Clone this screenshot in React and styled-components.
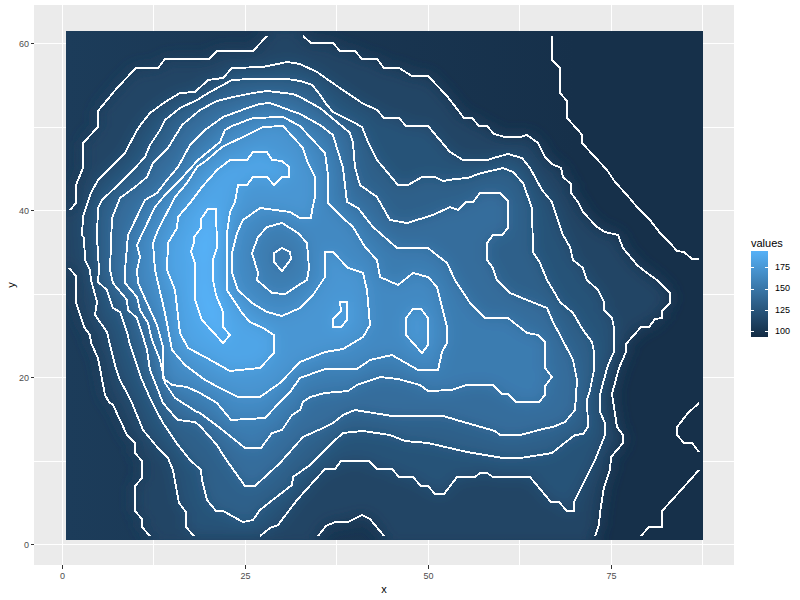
import styled, { createGlobalStyle } from 'styled-components';

const GlobalStyle = createGlobalStyle`
  html, body {
    margin: 0;
    background: #fff;
  }
`;

// contour lines traced in screen pixels, named by level
const A110 = [[70,210],[76,203],[76,185],[83,168],[83,143],[98,127],[98,111],[117,88],[136,68],[158,68],[165,59],[209,59],[217,51],[253,51],[267,36]];
const B110 = [[303,36],[311,43],[333,43],[340,51],[355,51],[362,59],[377,59],[384,68],[399,68],[412,76],[428,76],[447,96],[464,118],[472,118],[479,126],[487,126],[494,134],[505,137],[520,137],[527,135],[538,143],[545,157],[552,164],[561,168],[563,177],[571,184],[571,193],[578,202],[583,212],[597,227],[605,232],[618,235],[623,248],[637,265],[647,273],[657,280],[670,293],[670,303],[662,311],[662,318],[655,319],[649,327],[641,327],[626,344],[626,352],[619,368],[612,394],[617,427],[623,435],[623,443],[611,457],[610,470],[604,487],[600,513],[599,525],[595,536]];
const F110 = [[318,536],[326,526],[335,522],[348,522],[362,515],[370,519],[384,536]];
const G110 = [[69,268],[76,276],[76,302],[84,327],[90,335],[91,343],[98,358],[105,395],[109,402],[113,405],[127,435],[135,443],[135,453],[142,461],[142,478],[135,486],[135,511],[142,519],[142,527],[150,536]];
const C100 = [[552,36],[552,60],[560,68],[560,93],[567,101],[567,118],[578,130],[582,135],[582,143],[607,170],[615,182],[627,195],[637,207],[650,220],[660,233],[670,243],[677,251],[684,252],[692,259],[699,259]];
const D100 = [[699,403],[688,413],[677,427],[677,435],[684,443],[692,443],[699,452]];
const E100 = [[699,470],[682,489],[662,511],[662,527],[649,527],[641,536]];
const H120 = [[194,536],[186,527],[186,512],[179,503],[173,470],[168,458],[158,448],[143,430],[132,403],[127,393],[120,380],[115,365],[110,345],[107,332],[95,315],[97,302],[91,280],[90,270],[85,260],[84,238],[82,235],[83,217],[91,193],[98,180],[110,168],[125,153],[137,130],[142,123],[150,113],[165,102],[180,93],[195,92],[208,80],[223,78],[232,68],[263,67],[287,62],[300,64],[317,72],[337,86],[362,103],[377,110],[384,118],[399,118],[406,126],[428,126],[450,152],[463,160],[488,160],[497,157],[508,154],[522,158],[530,168],[542,190],[552,202],[557,217],[563,235],[570,247],[573,260],[583,268],[587,280],[598,290],[604,302],[604,310],[612,318],[614,328],[614,352],[608,365],[602,387],[600,395],[600,412],[605,423],[605,435],[595,460],[585,480],[574,502],[574,511],[567,511],[559,502],[551,502],[530,477],[493,477],[487,473],[480,473],[475,477],[457,477],[444,494],[435,494],[428,486],[421,486],[413,477],[399,477],[392,469],[377,469],[369,461],[341,461],[335,469],[325,469],[297,500],[278,525],[270,528],[260,536]];
const L130 = [[99,270],[97,237],[98,208],[102,200],[118,185],[133,170],[145,157],[150,145],[160,130],[165,120],[180,108],[197,100],[210,92],[232,80],[250,79],[287,79],[300,81],[312,85],[318,92],[327,105],[333,112],[353,122],[362,127],[368,142],[377,160],[398,185],[408,185],[422,177],[435,177],[443,181],[455,179],[468,178],[478,174],[503,168],[513,172],[523,183],[532,208],[533,252],[540,263],[547,280],[553,290],[560,302],[573,313],[583,330],[592,342],[594,352],[594,370],[590,390],[587,400],[588,427],[583,434],[575,435],[562,445],[552,453],[540,455],[520,458],[503,458],[467,452],[428,443],[405,441],[390,435],[363,431],[343,433],[333,442],[325,450],[310,465],[293,477],[292,485],[270,502],[260,510],[253,520],[243,522],[223,511],[216,511],[207,500],[202,480],[201,470],[190,460],[178,445],[163,423],[157,412],[150,398],[142,380],[137,365],[130,345],[127,332],[120,312],[113,308],[107,290],[98,282]];
const L140 = [[110,270],[112,218],[120,198],[135,187],[147,177],[153,163],[168,148],[182,125],[200,110],[217,101],[233,97],[253,93],[267,91],[293,94],[300,97],[320,108],[337,122],[350,133],[353,143],[355,167],[360,185],[377,197],[390,220],[407,223],[433,215],[450,207],[458,210],[466,202],[473,202],[480,193],[500,193],[508,201],[508,228],[502,235],[493,235],[487,243],[487,260],[493,268],[497,280],[510,293],[527,300],[547,308],[553,322],[560,335],[573,360],[577,380],[575,410],[565,422],[553,427],[547,428],[520,435],[500,435],[495,431],[467,423],[443,416],[392,416],[355,410],[343,415],[333,423],[323,428],[303,437],[280,463],[255,486],[245,486],[225,458],[217,445],[200,426],[195,422],[178,420],[175,417],[163,403],[158,390],[150,370],[147,350],[142,333],[137,318],[128,310],[127,300],[113,283]];
const L150 = [[125,270],[128,235],[145,200],[157,193],[167,180],[178,167],[190,145],[205,130],[223,117],[242,110],[260,104],[270,103],[300,114],[320,125],[333,135],[343,168],[347,202],[358,208],[373,227],[397,248],[428,248],[447,263],[455,280],[470,303],[485,318],[508,318],[527,333],[538,335],[545,342],[545,368],[552,377],[545,386],[545,395],[539,402],[516,402],[508,394],[502,394],[493,385],[467,385],[452,390],[428,391],[420,385],[398,379],[380,377],[357,385],[348,391],[325,393],[310,397],[303,402],[300,410],[292,415],[282,430],[272,433],[261,448],[245,448],[220,428],[200,413],[197,412],[175,398],[165,383],[160,360],[152,340],[148,323],[140,310],[137,297],[125,283]];
const L160 = [[137,270],[140,257],[137,245],[143,232],[155,207],[165,195],[180,180],[198,160],[220,142],[225,130],[232,126],[253,118],[283,117],[300,126],[310,137],[325,153],[328,175],[328,203],[343,218],[353,227],[365,247],[377,260],[380,277],[398,285],[413,273],[428,277],[437,287],[447,327],[447,343],[442,352],[438,370],[418,370],[392,355],[370,360],[357,369],[325,369],[300,378],[290,392],[280,402],[265,418],[231,420],[217,403],[200,393],[187,387],[172,385],[163,378],[163,347],[157,325],[147,303],[138,283]];
const L170 = [[155,270],[153,243],[158,230],[175,197],[187,183],[197,167],[207,160],[222,147],[247,135],[263,127],[283,126],[303,148],[308,163],[315,177],[315,197],[312,210],[311,218],[300,218],[290,212],[260,208],[243,220],[237,233],[232,253],[232,273],[238,290],[252,303],[267,312],[282,316],[300,308],[313,295],[325,277],[325,252],[333,252],[348,268],[363,273],[367,290],[370,325],[363,337],[343,349],[325,352],[300,362],[280,383],[260,397],[238,397],[220,388],[205,380],[185,365],[172,350],[165,313]];
const L180 = [[167,270],[168,243],[177,228],[178,217],[190,203],[202,187],[217,170],[230,160],[247,160],[253,152],[267,152],[272,160],[282,161],[289,167],[289,177],[282,177],[274,185],[267,177],[253,177],[247,185],[238,185],[235,202],[230,212],[227,233],[227,290],[242,313],[250,322],[263,328],[274,335],[274,353],[260,368],[230,371],[205,357],[188,348],[180,333],[175,290]];
const L190 = [[208,209],[216,209],[217,247],[213,260],[213,280],[216,295],[223,312],[223,327],[230,335],[223,343],[202,320],[195,300],[195,263],[191,252],[194,243],[194,237],[201,228],[201,219]];
const ISLE180 = [[340,302],[347,302],[347,320],[341,327],[333,327],[333,319],[341,311]];
const ISLE170 = [[413,309],[421,309],[428,318],[428,345],[422,353],[406,335],[406,318]];
const RING160 = [[267,227],[282,223],[298,233],[307,243],[309,268],[307,280],[302,283],[285,294],[272,293],[257,280],[258,273],[252,253],[258,237]];
const RING150 = [[282,248],[290,252],[291,259],[282,271],[274,262],[274,253]];

const open = [A110, B110, F110, G110, C100, D100, E100, H120];
const closed = [L130, L140, L150, L160, L170, L180, L190, ISLE180, ISLE170, RING160, RING150];

const REGION110 = [
  ...A110, [267,25], [303,25], ...B110, [595,548], [384,548],
  ...[...F110].reverse(), [318,548], [150,548],
  ...[...G110].reverse(), [58,268], [58,210],
];

// painted in order, then blurred, to stand in for the raster behind the lines
const bands = [
  [REGION110, 113], [H120, 124], [L130, 134], [L140, 144], [L150, 155], [L160, 165],
  [ISLE170, 176], [L170, 175], [L180, 186], [ISLE180, 187], [L190, 200], [RING160, 156], [RING150, 146],
];

const toPath = (pts, close) => 'M' + pts.map((p) => p.join(' ')).join('L') + (close ? 'Z' : '');

const shade = (v) => {
  const t = Math.min(1, Math.max(0, (v - 94) / 101));
  const mix = (a, b) => Math.round(a + (b - a) * t);
  return `rgb(${mix(0x13, 0x56)},${mix(0x2b, 0xb1)},${mix(0x43, 0xf7)})`;
};

const H_GRID = [544, 461, 377, 294, 210, 127, 43];
const V_GRID = [62, 153, 245, 336, 428, 519, 611, 702];
const X_TICKS = [[62, '0'], [245, '25'], [428, '50'], [611, '75']];
const Y_TICKS = [[544, '0'], [377, '20'], [210, '40'], [43, '60']];
const LEGEND_TICKS = [16, 38, 59, 80];
const LEGEND_LABELS = ['175', '150', '125', '100'];

const Page = styled.div`
  width: 800px;
  height: 600px;
  display: flex;
  font-family: 'Liberation Sans', Arial, sans-serif;
  overflow: hidden;
`;

const Chart = styled.svg`
  display: block;
  flex: none;
  width: 745px;
  height: 600px;
`;

const GridLine = styled.line`
  stroke: #fff;
  stroke-width: 1;
  shape-rendering: crispEdges;
`;

const TickMark = styled.line`
  stroke: #333;
  stroke-width: 1;
  shape-rendering: crispEdges;
`;

const AxisLabel = styled.text`
  font-size: 9px;
  fill: #4d4d4d;
`;

const AxisTitle = styled.text`
  font-size: 11px;
  fill: #000;
`;

const Contour = styled.path`
  fill: none;
  stroke: #fff;
  stroke-width: 1.9;
  stroke-linejoin: round;
  shape-rendering: crispEdges;
`;

const Legend = styled.div`
  margin-left: 6px;
  padding-top: 236px;
`;

const LegendTitle = styled.div`
  font-size: 11px;
  line-height: 15px;
  color: #000;
`;

const LegendBody = styled.div`
  display: flex;
  gap: 7px;
`;

const ColorBar = styled.div`
  position: relative;
  width: 17px;
  height: 86px;
  background: linear-gradient(to bottom, #56b1f7, #132b43);
`;

const BarTick = styled.span`
  position: absolute;
  left: 0;
  right: 0;
  top: ${(p) => p.$top}px;
  height: 1px;
  background: linear-gradient(to right, #fff 3px, transparent 3px, transparent 14px, #fff 14px);
`;

const LegendLabels = styled.div`
  display: flex;
  flex-direction: column;
  padding-top: 6px;
`;

const LegendLabel = styled.span`
  font-size: 9px;
  line-height: 21.3px;
  color: #000;
`;

export default function App() {
  return (
    <Page>
      <GlobalStyle />
      <Chart viewBox="0 0 745 600">
        <defs>
          <linearGradient id="base" x1="0" x2="1" y1="0" y2="0">
            <stop offset="0" stopColor={shade(107)} />
            <stop offset="0.8" stopColor={shade(98)} />
            <stop offset="1" stopColor={shade(98)} />
          </linearGradient>
          <clipPath id="raster">
            <rect x="66" y="31" width="637" height="509" />
          </clipPath>
          <filter id="soft" filterUnits="userSpaceOnUse" x="0" y="0" width="745" height="600">
            <feGaussianBlur stdDeviation="8" />
          </filter>
        </defs>

        <rect x="34" y="5" width="700" height="560" fill="#ebebeb" />
        {H_GRID.map((y) => (
          <GridLine key={y} x1="34" x2="734" y1={y + 0.5} y2={y + 0.5} />
        ))}
        {V_GRID.map((x) => (
          <GridLine key={x} x1={x + 0.5} x2={x + 0.5} y1="5" y2="565" />
        ))}

        <g clipPath="url(#raster)">
          <rect x="66" y="31" width="637" height="509" fill="url(#base)" />
          <g filter="url(#soft)">
            {bands.map(([pts, v], i) => (
              <path key={i} d={toPath(pts, true)} fill={shade(v)} />
            ))}
          </g>
        </g>

        {open.map((pts, i) => (
          <Contour key={i} d={toPath(pts, false)} />
        ))}
        {closed.map((pts, i) => (
          <Contour key={i} d={toPath(pts, true)} />
        ))}

        {X_TICKS.map(([x, label]) => (
          <g key={x}>
            <TickMark x1={x + 0.5} x2={x + 0.5} y1="565" y2="569" />
            <AxisLabel x={x + 0.5} y="579" textAnchor="middle">{label}</AxisLabel>
          </g>
        ))}
        {Y_TICKS.map(([y, label]) => (
          <g key={y}>
            <TickMark x1="31" x2="34" y1={y + 0.5} y2={y + 0.5} />
            <AxisLabel x="29" y={y + 4} textAnchor="end">{label}</AxisLabel>
          </g>
        ))}

        <AxisTitle x="384" y="593" textAnchor="middle">x</AxisTitle>
        <AxisTitle x="15" y="285" textAnchor="middle" transform="rotate(-90 15 285)">y</AxisTitle>
      </Chart>

      <Legend>
        <LegendTitle>values</LegendTitle>
        <LegendBody>
          <ColorBar>
            {LEGEND_TICKS.map((top) => (
              <BarTick key={top} $top={top} />
            ))}
          </ColorBar>
          <LegendLabels>
            {LEGEND_LABELS.map((label) => (
              <LegendLabel key={label}>{label}</LegendLabel>
            ))}
          </LegendLabels>
        </LegendBody>
      </Legend>
    </Page>
  );
}
